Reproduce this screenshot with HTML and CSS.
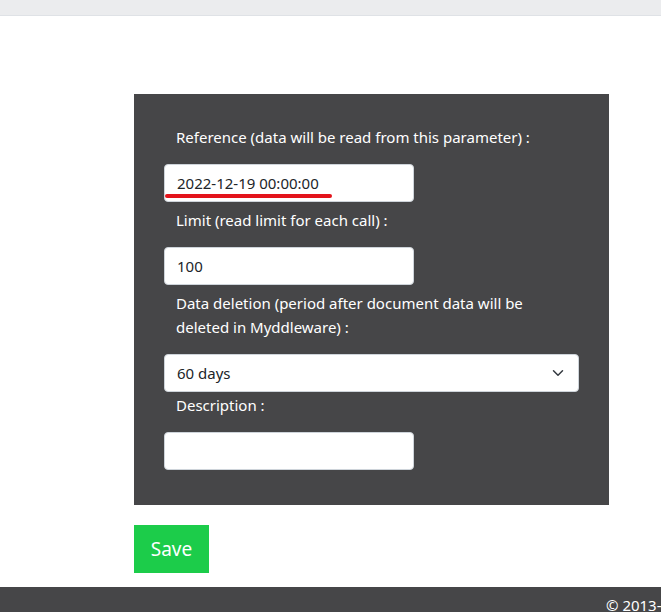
FILE: index.html
```html
<!DOCTYPE html>
<html>
<head>
<meta charset="utf-8">
<title>Rule parameters</title>
<link rel="stylesheet" href="styles.css">
</head>
<body>
<div class="topbar"></div>
<main class="content">
  <form class="panel">
    <div class="field">
      <label class="label">Reference (data will be read from this parameter) :</label>
      <div class="control-wrap">
        <input class="input" type="text" value="2022-12-19 00:00:00">
        <span class="mark"></span>
      </div>
    </div>
    <div class="field">
      <label class="label">Limit (read limit for each call) :</label>
      <input class="input" type="text" value="100">
    </div>
    <div class="field">
      <label class="label">Data deletion (period after document data will be deleted in Myddleware) :</label>
      <div class="control-wrap">
        <select class="select">
          <option>60 days</option>
        </select>
        <svg class="chevron" width="16" height="12" viewBox="0 0 16 16"><path d="M2 5l6 6 6-6" fill="none" stroke="#343a40" stroke-width="2" stroke-linecap="round" stroke-linejoin="round"/></svg>
      </div>
    </div>
    <div class="field field-tight">
      <label class="label">Description :</label>
      <input class="input" type="text" value="">
    </div>
  </form>
  <button class="save" type="button">Save</button>
</main>
<footer class="footer"><span class="copy">© 2013-2023 Myddleware</span></footer>
</body>
</html>
```
FILE: styles.css
```css
html, body {
  margin: 0;
  padding: 0;
  overflow: hidden;
}
body {
  font-family: "Noto Sans", "Open Sans", sans-serif;
  font-size: 15px;
  background: #ffffff;
  color: #212529;
}
.topbar {
  height: 15px;
  background: #ebecee;
  border-bottom: 1px solid #dfe2e6;
}
.content {
  padding: 78px 0 14px 134px;
}
.panel {
  width: 475px;
  height: 411px;
  box-sizing: border-box;
  background: #464648;
  padding: 31px 30px 0 30px;
  margin: 0;
}
.field {
  display: flex;
  flex-direction: column;
  width: 415px;
  margin-bottom: 6px;
}
.field-tight {
  margin-top: -5px;
}
.label {
  display: block;
  color: #ffffff;
  line-height: 24px;
  padding: 0 12px;
  margin-bottom: 15px;
}
.control-wrap {
  position: relative;
}
.input {
  display: block;
  box-sizing: border-box;
  width: 250px;
  height: 38px;
  padding: 0 12px;
  border: 1px solid #ced4da;
  border-radius: 4px;
  background: #ffffff;
  font-family: "Noto Sans", "Open Sans", sans-serif;
  font-size: 15px;
  color: #212529;
  outline: none;
}
.mark {
  position: absolute;
  left: 1px;
  top: 30px;
  width: 167px;
  height: 4px;
  border-radius: 2px;
  background: #e3131b;
}
.select {
  display: block;
  box-sizing: border-box;
  width: 415px;
  height: 38px;
  padding: 0 12px;
  border: 1px solid #ced4da;
  border-radius: 4px;
  background: #ffffff;
  font-family: "Noto Sans", "Open Sans", sans-serif;
  font-size: 15px;
  color: #212529;
  -webkit-appearance: none;
  appearance: none;
  outline: none;
}
.chevron {
  position: absolute;
  right: 13px;
  top: 13px;
  pointer-events: none;
}
.save {
  display: block;
  margin-top: 20px;
  width: 75px;
  height: 48px;
  padding: 0;
  border: none;
  border-radius: 0;
  background: #1ccc4a;
  color: #ffffff;
  font-family: "Noto Sans", "Open Sans", sans-serif;
  font-size: 19px;
}
.footer {
  height: 40px;
  box-sizing: border-box;
  background: #464648;
  color: #ffffff;
  padding: 6px 0 0 606px;
  line-height: 24px;
  font-size: 15px;
  white-space: nowrap;
  overflow: hidden;
}
```
